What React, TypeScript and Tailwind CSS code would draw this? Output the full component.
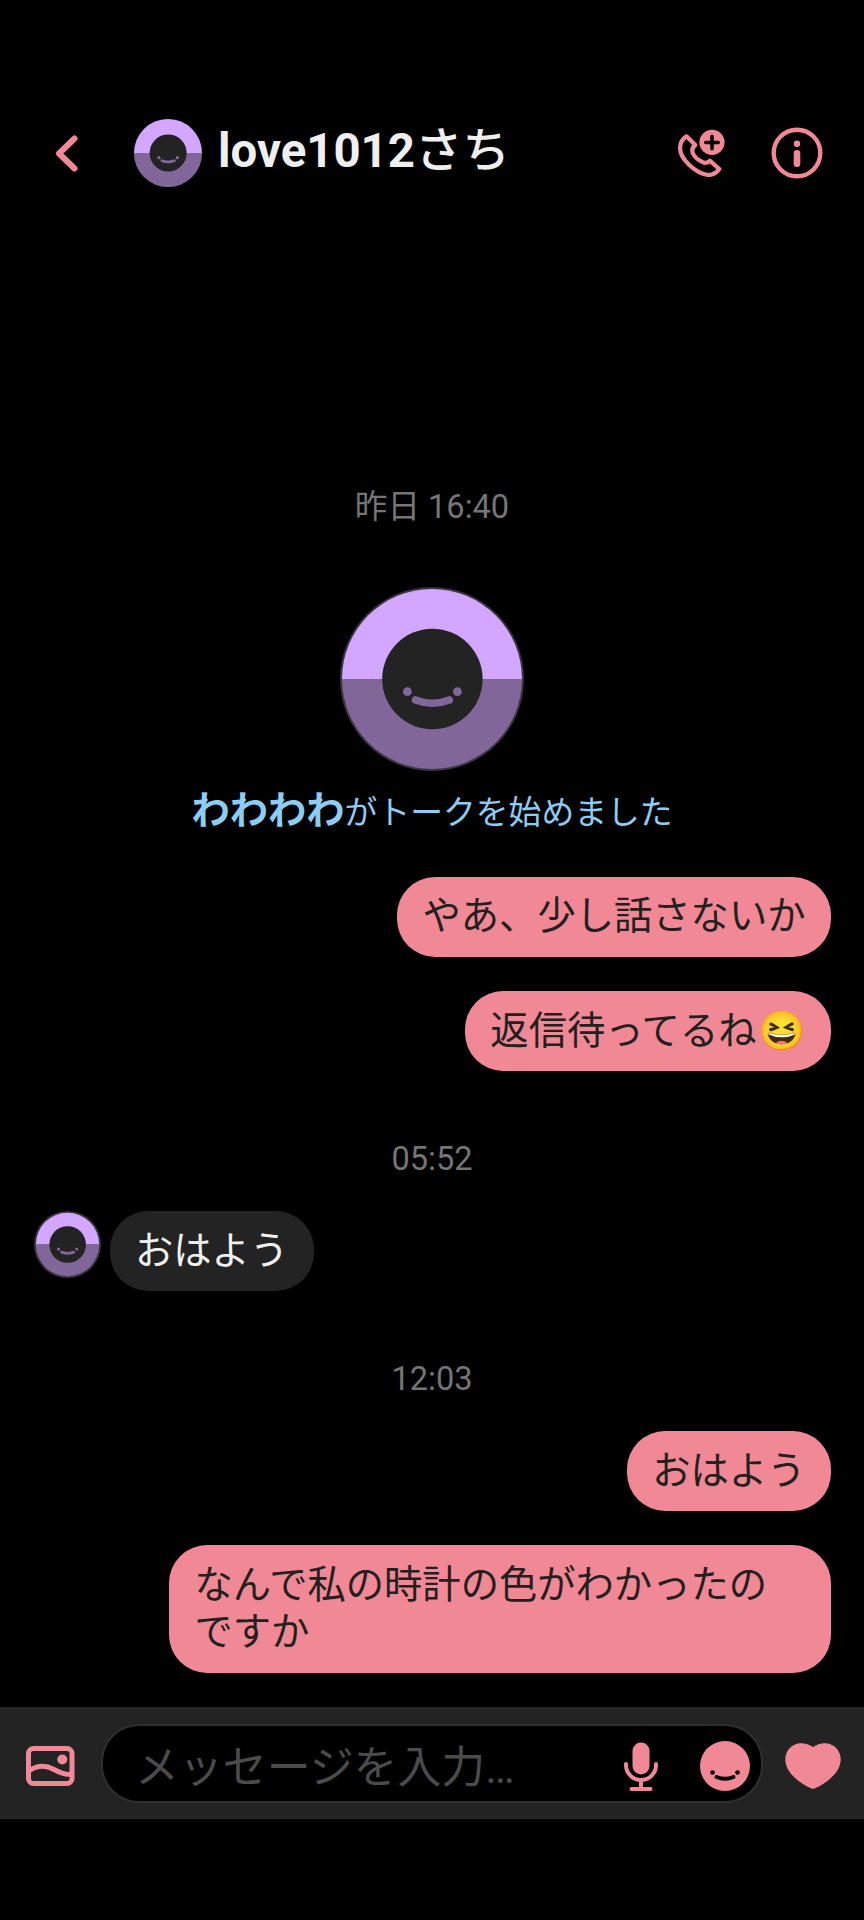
import React from "react";

const JP = "font-[Roboto,'Noto_Sans_CJK_JP',sans-serif]";

function Avatar({ className, ring = 2 }: { className: string; ring?: number }) {
  const r = 92 - ring;
  return (
    <svg viewBox="0 0 184 184" className={className} aria-hidden="true">
      <circle cx="92" cy="92" r="92" fill="#3b353f" />
      <path d={`M${ring} 92a${r} ${r} 0 0 1 ${2 * r} 0z`} fill="#d3a6ff" />
      <path d={`M${ring} 92a${r} ${r} 0 0 0 ${2 * r} 0z`} fill="#81669a" />
      <circle cx="92.400" cy="92" r="50.200" fill="#232323" />
      <circle cx="67.400" cy="104.700" r="4.400" fill="#81669a" />
      <circle cx="117.400" cy="104.700" r="4.400" fill="#81669a" />
      <path d="M75.500 113Q92.400 119.500 109.300 113" fill="none" stroke="#81669a" strokeWidth="7.600" strokeLinecap="round" />
    </svg>
  );
}

function Header() {
  return (
    <header className="flex h-[94px] items-center pr-[41px] pl-[54px]">
      <svg viewBox="0 0 26 40" className="h-10 w-[26px]" fill="none" stroke="#f08995" strokeWidth="6" strokeLinecap="round" strokeLinejoin="round">
        <path d="M20.500 5.500 5 20.500 20.500 35.500" />
      </svg>
      <Avatar ring={0} className="ml-[54px] size-[68px]" />
      <h1 className="-mt-[4px] ml-[16px] flex-1 text-[47.4px] leading-[54px] font-bold whitespace-nowrap text-[#efefef]">
        love1012<span className="font-medium">さち</span>
      </h1>
      <svg viewBox="0 0 48 48" className="size-12" fill="none">
        <path
          d="M9.500 7.300 18.300 16Q13.800 19.500 16 24.500T24.500 32.500Q29 35.500 33 31.800L42.300 40Q38 46 31.500 46Q21.500 45 11.800 35.500T3.200 17.500Q3.500 11.500 9.500 7.300Z"
          stroke="#f08995"
          strokeWidth="4.200"
          strokeLinejoin="round"
        />
        <circle cx="35" cy="13.300" r="12.600" fill="#f08995" />
        <path d="M35 7.300v12.400M28.800 13.500h12.400" stroke="#000" strokeWidth="3.600" strokeLinecap="round" />
      </svg>
      <svg viewBox="0 0 52 52" className="ml-[46px] size-[52px]" fill="none">
        <circle cx="26" cy="26" r="23.300" stroke="#f08995" strokeWidth="4.400" />
        <circle cx="26" cy="16.800" r="3.200" fill="#f08995" />
        <path d="M26 26.200v10.600" stroke="#f08995" strokeWidth="6.600" strokeLinecap="round" />
      </svg>
    </header>
  );
}

function Stamp({ children, className }: { children: React.ReactNode; className: string }) {
  return <time className={`block text-center text-[32.6px] leading-[40px] text-[#757575] ${className}`}>{children}</time>;
}

function Bubble({ children, incoming = false, className = "" }: { children: React.ReactNode; incoming?: boolean; className?: string }) {
  const tone = incoming ? "bg-[#232323] text-[#f0f0f0]" : "self-end bg-[#f08995] text-[#232020]";
  return (
    <p className={`rounded-[38px] px-[25.5px] pt-[15.800px] pb-[17.700px] text-[38.3px] leading-[47px] ${tone} ${className}`}>{children}</p>
  );
}

function Composer() {
  return (
    <footer className="flex h-[112px] items-center border-b border-[#2b2b2b] bg-[#232323] pt-[2px]">
      <svg viewBox="0 0 49 40" className="mt-[4px] ml-[26px] h-10 w-[49px]" fill="none" stroke="#f08995" strokeWidth="5">
        <rect x="2.500" y="2.500" width="43.500" height="35" rx="5" />
        <path d="M3 25Q15 16.500 28 23.500T46 27.500" />
        <circle cx="36.300" cy="13.500" r="5" fill="#f08995" stroke="none" />
      </svg>
      <div className="ml-[26px] flex h-[79px] w-[662px] items-center rounded-[38px] border-2 border-[#2f2f2f] bg-black pr-[11px] pl-[32px]">
        <span className="mt-[9px] flex-1 text-[43.900px] leading-[60px] whitespace-nowrap text-[#4b4b4b]">メッセージを入力…</span>
        <svg viewBox="0 0 36 50" className="mt-[4px] h-[50px] w-9" fill="none" stroke="#f08995" strokeWidth="4" strokeLinecap="round">
          <rect x="9.500" y="1.500" width="17" height="32" rx="8.500" fill="#f08995" stroke="none" />
          <path d="M3 23v1a15 15 0 0 0 30 0v-1M18 39v9M8.500 48h19" />
        </svg>
        <svg viewBox="0 0 50 50" className="mt-[4px] ml-[41px] size-[50px]">
          <circle cx="25" cy="25" r="25" fill="#f08995" />
          <circle cx="12.500" cy="31.500" r="2.300" />
          <circle cx="37.500" cy="31.500" r="2.300" />
          <path d="M16.500 36Q25 39.500 33.500 36" fill="none" stroke="#000" strokeWidth="3.800" strokeLinecap="round" />
        </svg>
      </div>
      <svg viewBox="0 0 56 46" className="mt-[4px] ml-[22px] h-[46px] w-14" fill="#f08995">
        <path d="M28 4C32 1.500 36 0 41 .3C50 1 56 8.500 55.700 17C55.300 29 43 39.500 30 45.300Q28 46.300 26 45.300C13 39.500.7 29 .3 17C0 8.500 6 1 15 .3C20 0 24 1.500 28 4Z" />
      </svg>
    </footer>
  );
}

export default function App() {
  return (
    <div lang="ja" className={`flex h-[1920px] w-[864px] flex-col bg-black pt-[106px] ${JP}`}>
      <Header />
      <main className="flex h-[1507px] flex-col pr-[33px] pl-[33px]">
        <Stamp className="mt-[287px]">昨日 16:40</Stamp>
        <Avatar className="mt-[60px] size-[184px] self-center" />
        <p className="mt-[15px] text-center text-[32.8px] leading-[50px] whitespace-nowrap text-[#8bcdf3]">
          <strong className="text-[38.3px] font-bold">わわわわ</strong>がトークを始めました
        </p>
        <Bubble className="mt-[38.5px]">やあ、少し話さないか</Bubble>
        <Bubble className="mt-[34px]">返信待ってるね<span className="ml-[1px]">😆</span></Bubble>
        <Stamp className="mt-[67.5px]">05:52</Stamp>
        <div className="mt-[32px] flex items-start">
          <Avatar ring={5} className="mt-[0.5px] ml-[1px] size-[67px]" />
          <Bubble incoming className="ml-[8.5px]">おはよう</Bubble>
        </div>
        <Stamp className="mt-[67.5px]">12:03</Stamp>
        <Bubble className="mt-[32px]">おはよう</Bubble>
        <Bubble className="mt-[34px] w-[662px]">なんで私の時計の色がわかったの<br />ですか</Bubble>
      </main>
      <Composer />
    </div>
  );
}
